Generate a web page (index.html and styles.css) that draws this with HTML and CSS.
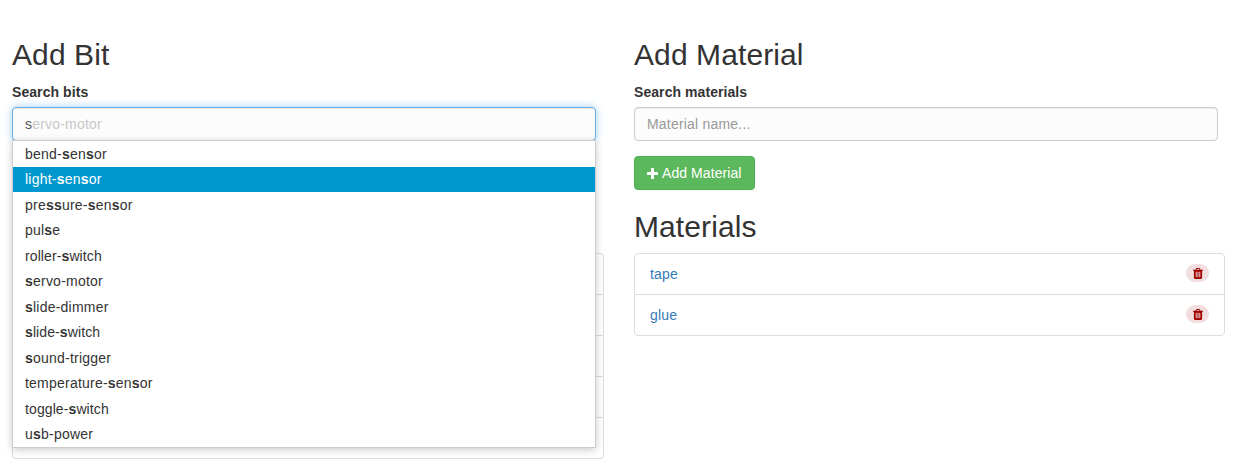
FILE: index.html
```
<!DOCTYPE html>
<html lang="en">
<head>
<meta charset="utf-8">
<title>Add Bit</title>
<link rel="stylesheet" href="styles.css">
</head>
<body>
<main class="row">
  <section class="column">
    <h2>Add Bit</h2>
    <label for="bits">Search bits</label>
    <div class="typeahead">
      <div class="input focused" id="bits"><span>s</span><span class="hint">ervo-motor</span></div>
      <ul class="menu">
        <li>bend-<b>s</b>en<b>s</b>or</li>
        <li class="active">light-<b>s</b>en<b>s</b>or</li>
        <li>pre<b>ss</b>ure-<b>s</b>en<b>s</b>or</li>
        <li>pul<b>s</b>e</li>
        <li class="tight">roller-<b>s</b>witch</li>
        <li>
          <b>s</b>ervo-motor</li>
        <li><b>s</b>lide-dimmer</li>
        <li class="tight"><b>s</b>lide-<b>s</b>witch</li>
        <li><b>s</b>ound-trigger</li>
        <li>temperature-<b>s</b>en<b>s</b>or</li>
        <li class="tight">toggle-<b>s</b>witch</li>
        <li>u<b>s</b>b-power</li>
      </ul>
    </div>
    <ul class="list bits"><li></li><li></li><li></li><li></li><li></li></ul>
  </section>
  <section class="column">
    <h2>Add Material</h2>
    <label for="material">Search materials</label>
    <input class="input" id="material" placeholder="Material name...">
    <button class="add"><svg class="plus" viewBox="0 0 11 11"><path d="M4.5 0h2q.5 0 .5.5V4h3.500q.5 0 .5.5v2q0 .5-.5.5H7v3.500q0 .5-.5.5h-2q-.5 0-.5-.5V7H.5Q0 7 0 6.500v-2Q0 4 .5 4H4V.5q0-.5.5-.5z"/></svg>Add Material</button>
    <h2 class="subhead">Materials</h2>
    <ul class="list">
      <li><a>tape</a><span class="badge"><svg viewBox="0 0 1408 1536"><path d="M512 1248V544q0-32-32-32h-64q-32 0-32 32v704q0 32 32 32h64q32 0 32-32zm256 0V544q0-32-32-32h-64q-32 0-32 32v704q0 32 32 32h64q32 0 32-32zm256 0V544q0-32-32-32h-64q-32 0-32 32v704q0 32 32 32h64q32 0 32-32zM480 256h448l-48-117q-7-9-17-11H546q-10 2-17 11zm928 32v64q0 32-32 32h-96v948q0 83-47 143t-113 61H288q-66 0-113-58t-47-141V384H32q-32 0-32-32v-64q0-32 32-32h309l70-167q15-37 54-63t79-26h320q40 0 79 26t54 63l70 167h309q32 0 32 32z"/></svg></span></li>
      <li><a>glue</a><span class="badge"><svg viewBox="0 0 1408 1536"><path d="M512 1248V544q0-32-32-32h-64q-32 0-32 32v704q0 32 32 32h64q32 0 32-32zm256 0V544q0-32-32-32h-64q-32 0-32 32v704q0 32 32 32h64q32 0 32-32zm256 0V544q0-32-32-32h-64q-32 0-32 32v704q0 32 32 32h64q32 0 32-32zM480 256h448l-48-117q-7-9-17-11H546q-10 2-17 11zm928 32v64q0 32-32 32h-96v948q0 83-47 143t-113 61H288q-66 0-113-58t-47-141V384H32q-32 0-32-32v-64q0-32 32-32h309l70-167q15-37 54-63t79-26h320q40 0 79 26t54 63l70 167h309q32 0 32 32z"/></svg></span></li>
    </ul>
  </section>
</main>
</body>
</html>
```
FILE: styles.css
```
* { box-sizing: border-box; }
body {
  margin: 0;
  height: 474px;
  overflow: hidden;
  background: #fff;
  color: #333;
  font: 14px/20px "Nimbus Sans", "Liberation Sans", Arial, sans-serif;
}
.row { display: grid; grid-template-columns: 592px 591px; gap: 30px; padding: 38px 12px 0; }
.column { display: flex; flex-direction: column; }
h2 { margin: 0 0 11px; font-size: 30px; font-weight: 400; line-height: 33px; letter-spacing: .1px; }
label { margin-bottom: 5px; font-weight: 700; letter-spacing: .07px; }
.typeahead { position: relative; width: 584px; }
.input {
  display: block;
  width: 584px;
  height: 34px;
  padding: 6px 12px;
  border: 1px solid #ccc;
  border-radius: 4px;
  background: #fcfcfc;
  color: #555;
  font: inherit;
  letter-spacing: .2px;
  box-shadow: inset 0 1px 1px rgba(0, 0, 0, .075);
}
.input::placeholder { color: #999; opacity: 1; }
.focused { border-color: #66afe9; box-shadow: inset 0 1px 1px rgba(0, 0, 0, .075), 0 0 8px rgba(102, 175, 233, .6); }
.hint { color: #c8c8c8; }
.menu {
  position: absolute;
  z-index: 2;
  top: 33px;
  left: 0;
  width: 584px;
  height: 308px;
  margin: 0;
  padding: 0;
  list-style: none;
  background: #fff;
  border: 1px solid #ccc;
  box-shadow: 0 2px 8px rgba(0, 0, 0, .2);
  letter-spacing: .22px;
}
.menu li { height: 25.5px; padding: 2.75px 12px; }
.menu .tight { letter-spacing: .1px; }
.menu .active { background: #0097cf; color: #fff; }
.list { margin: 0; padding: 0; list-style: none; border: 1px solid #ddd; border-radius: 4px; }
.list li { display: flex; align-items: center; justify-content: space-between; height: 41px; padding: 0 15px; border-bottom: 1px solid #ddd; }
.list li:last-child { height: 40px; border-bottom: 0; }
.bits { margin-top: 112px; }
.list a { color: #337ab7; letter-spacing: .15px; }
.badge { display: flex; align-items: center; justify-content: center; width: 23px; height: 18px; margin-bottom: 2px; border-radius: 10px; background: #f2dede; }
.badge svg { width: 10px; height: 11px; fill: #a00000; }
.add {
  display: flex;
  align-items: center;
  gap: 4px;
  width: 121px;
  height: 34px;
  margin: 15px 0 20px;
  padding: 0 12px;
  border: 1px solid #4cae4c;
  border-radius: 4px;
  background: #5cb85c;
  color: #fff;
  font: inherit;
  letter-spacing: .08px;
  white-space: nowrap;
}
.plus { width: 11px; height: 11px; fill: #fff; }
.subhead { margin-bottom: 10px; }
```
